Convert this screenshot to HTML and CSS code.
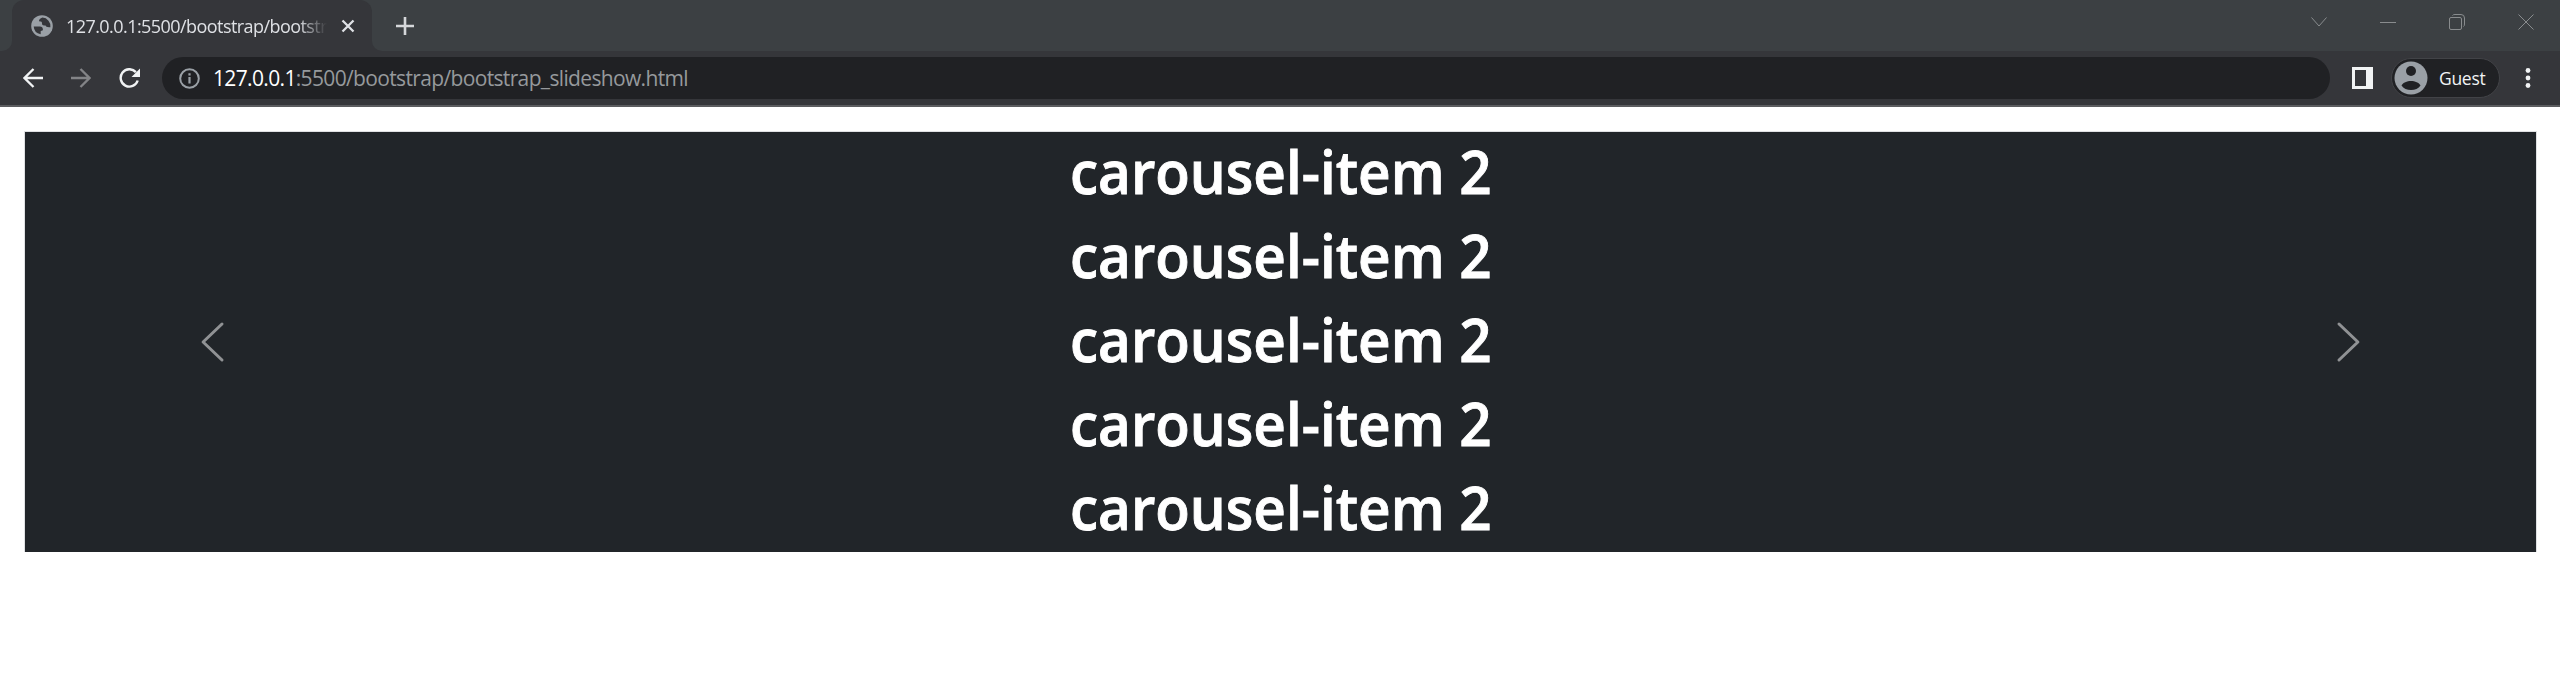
FILE: index.html
```html
<!DOCTYPE html>
<html lang="en">
<head>
<meta charset="utf-8">
<title>Slideshow</title>
<link rel="stylesheet" href="styles.css">
</head>
<body>
<header class="browser">
  <div class="tabstrip">
    <div class="tab-lead"></div>
    <div class="tab">
      <svg class="favicon" width="22" height="22" viewBox="0 0 22 22"><circle cx="11" cy="11" r="10.8" fill="#9aa0a6"/><path d="M11.4 2.6C9.2 3.6 8 4.6 8 6.3c2.600 0 3 .8 3 2.300 0 2 1.600 2 3.600 2 .4 1.400 1.600 1.800 4.800 1.600A8.500 8.500 0 0 0 11.400 2.600Z" fill="#35363a"/><path d="M2.700 11.500h6.200c1.900 0 3 1.100 3 3 0 1-.7 1.300-2.200 1.400v3.400A8.500 8.500 0 0 1 2.700 11.500Z" fill="#35363a"/></svg>
      <span class="tab-title">127.0.0.1:5500/bootstrap/bootstr</span>
      <svg class="tab-close" width="14" height="14" viewBox="0 0 14 14"><path d="M1.500 1.500l11 11M12.500 1.500l-11 11" stroke="#dfe1e5" stroke-width="2.300"/></svg>
    </div>
    <div class="strip-rest">
      <svg class="plus" width="18" height="18" viewBox="0 0 18 18"><path d="M9 0v18M0 9h18" stroke="#d5d7da" stroke-width="2.600"/></svg>
      <div class="window-controls">
        <svg width="16" height="16" viewBox="0 0 16 16"><path d="M.5 3.500 8 12l7.500-8.500"/></svg>
        <svg width="16" height="16" viewBox="0 0 16 16"><path d="M0 8.500h16"/></svg>
        <svg width="16" height="16" viewBox="0 0 16 16"><rect x=".5" y="3.500" width="12" height="12" rx="1.500"/><path d="M3.500 1.500Q4 .5 6 .5h6q3.500 0 3.500 3.500v6q0 2-1 2.500"/></svg>
        <svg width="16" height="16" viewBox="0 0 16 16"><path d="M.5.5l15 15M15.500.5l-15 15"/></svg>
      </div>
    </div>
  </div>
  <div class="toolbar">
    <svg class="nav back" width="20" height="20" viewBox="0 0 20 20"><path d="M20 10H2M10.500 1 1.500 10l9 9" fill="none" stroke="#f1f3f4" stroke-width="2.300"/></svg>
    <svg class="nav forward" width="20" height="20" viewBox="0 0 20 20"><path d="M0 10h18M9.500 1l9 9-9 9" fill="none" stroke="#838487" stroke-width="2.300"/></svg>
    <svg class="nav reload" width="22" height="20" viewBox="0 0 22 20"><path d="M16.900 4.100A8.700 8.700 0 1 0 18.700 12.500" fill="none" stroke="#f1f3f4" stroke-width="2.400"/><path d="M21 .5v8.500h-8.500Z" fill="#f1f3f4"/></svg>
    <div class="address">
      <svg width="21" height="21" viewBox="0 0 21 21"><circle cx="10.500" cy="10.500" r="9.300" fill="none" stroke="#9aa0a6" stroke-width="2"/><path d="M9.400 9h2.200v6.500H9.400ZM9.400 5.300h2.200v2.200H9.400Z" fill="#9aa0a6"/></svg>
      <span class="url"><b>127.0.0.1</b>:5500/bootstrap/bootstrap_slideshow.html</span>
    </div>
    <svg class="side-panel" width="21" height="22" viewBox="0 0 21 22"><path d="M0 0h21v22H0ZM3 3v16h11V3Z" fill="#f1f3f4" fill-rule="evenodd"/></svg>
    <div class="profile">
      <svg width="34" height="34" viewBox="0 0 34 34"><circle cx="17" cy="17" r="16.500" fill="#9aa0a6"/><circle cx="17" cy="10" r="5" fill="#202124"/><path d="M7.500 24.500C9 21.500 13 20 17 20s8 1.500 9.500 4.500C24.500 27.500 21 29 17 29s-7.500-1.500-9.500-4.500Z" fill="#202124"/></svg>
      <span>Guest</span>
    </div>
    <svg class="menu" width="6" height="20" viewBox="0 0 6 20"><g fill="#f1f3f4"><circle cx="3" cy="2.500" r="2.400"/><circle cx="3" cy="10" r="2.400"/><circle cx="3" cy="17.500" r="2.400"/></g></svg>
  </div>
</header>
<main class="page">
  <section class="carousel">
    <button class="control"><svg width="48" height="48" viewBox="0 0 16 16"><path d="M11 2 4.700 8l6.300 6" /></svg></button>
    <div class="slide">
      <h1>carousel-item 2</h1>
      <h1>carousel-item 2</h1>
      <h1>carousel-item 2</h1>
      <h1>carousel-item 2</h1>
      <h1>carousel-item 2</h1>
    </div>
    <button class="control"><svg width="48" height="48" viewBox="0 0 16 16"><path d="M5 2l6.300 6L5 14" /></svg></button>
  </section>
</main>
</body>
</html>
```
FILE: styles.css
```css
* { box-sizing: border-box; }
body { margin: 0; background: #fff; font-family: "Noto Sans", "Open Sans", sans-serif; overflow: hidden; }
svg { display: block; flex: none; }
.browser { height: 107px; background: #35363a; border-bottom: 2px solid #5b5c5f; }
.tabstrip { display: flex; height: 51px; }
.tab-lead { width: 12px; background: #3c4043; border-bottom-right-radius: 10px; }
.tab { display: flex; align-items: center; width: 360px; padding-left: 19px; background: #35363a; box-shadow: 0 -12px 0 #3c4043; border-radius: 12px 12px 0 0; }
.tab-title { width: 261px; margin-left: 13px; white-space: nowrap; font-family: "Open Sans", sans-serif; font-size: 18px; line-height: 26px; letter-spacing: -.56px; color: #dfe1e5; -webkit-mask-image: linear-gradient(90deg, #000 232px, transparent 261px); mask-image: linear-gradient(90deg, #000 232px, transparent 261px); }
.tab-close { margin-left: 14px; }
.strip-rest { flex: 1; display: flex; align-items: center; justify-content: space-between; padding: 0 26px 0 24px; background: #3c4043; border-bottom-left-radius: 10px; }
.window-controls { display: flex; gap: 53px; padding-bottom: 8px; fill: none; stroke: #898c8e; stroke-width: 1; }
.toolbar { display: flex; align-items: center; height: 54px; }
.back { margin-left: 23px; }
.forward { margin-left: 28px; }
.reload { margin-left: 28px; }
.address { display: flex; align-items: center; width: 2168px; height: 42px; margin-left: 21px; padding-left: 17px; border-radius: 21px; background: #202124; }
.url { margin-left: 13px; font-family: "Open Sans", sans-serif; font-size: 21px; line-height: 28px; letter-spacing: -.65px; white-space: nowrap; color: #96999c; }
.url b { font-weight: 400; color: #fff; }
.side-panel { margin-left: 22px; }
.profile { display: flex; align-items: center; width: 109px; height: 40px; margin-left: 18px; padding-left: 2px; border: 1px solid #424347; border-radius: 20px; background: #202124; }
.profile span { margin-left: 11px; font-family: "Open Sans", sans-serif; font-size: 17.500px; line-height: 24px; letter-spacing: -.3px; color: #f1f3f4; }
.menu { margin-left: 25px; }
.page { padding: 25px 24px 0 25px; }
.carousel { display: flex; align-items: stretch; height: 420px; background: #212529; box-shadow: 0 0 0 1px #dfe1e3; }
.control { display: flex; align-items: center; justify-content: center; width: 15%; padding: 0; border: 0; background: none; }
.control path { fill: none; stroke: #909294; stroke-width: 1; stroke-linecap: round; stroke-linejoin: round; }
.slide { flex: 1; text-align: center; color: #fff; }
.slide h1 { margin: 0; height: 84px; font-family: "Open Sans", sans-serif; font-size: 60px; line-height: 78px; font-weight: 600; -webkit-text-stroke: .9px #fff; transform: scaleX(.943); white-space: nowrap; }
```
